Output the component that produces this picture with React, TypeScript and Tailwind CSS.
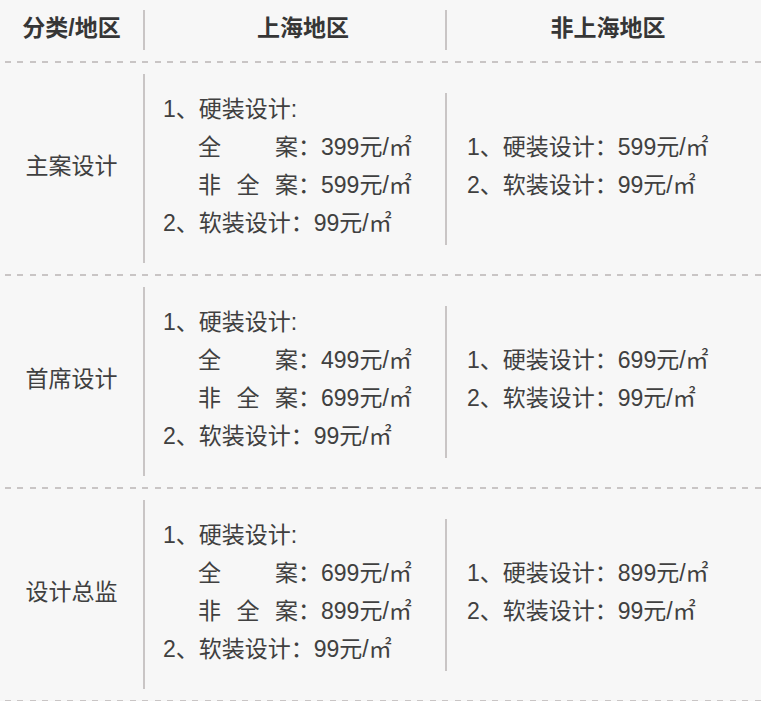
type Row = {
  name: string;
  full: string;
  notFull: string;
  other: string;
};

const ROWS: Row[] = [
  { name: '主案设计', full: '399', notFull: '599', other: '599' },
  { name: '首席设计', full: '499', notFull: '699', other: '699' },
  { name: '设计总监', full: '699', notFull: '899', other: '899' },
];

function Dash() {
  return (
    <div className="h-[2px] w-full bg-[repeating-linear-gradient(to_right,transparent_0_5px,#c9c5c5_5px_11px,transparent_11px_12.5px)]" />
  );
}

function Label({ text }: { text: string }) {
  return (
    <span className="inline-block w-[100px] [text-align-last:justify] text-justify">{text}</span>
  );
}

export default function App() {
  return (
    <div className="w-[761px] h-[701px] bg-[#f7f7f7] text-[23px] text-[#404040] font-['Liberation_Sans','Noto_Sans_CJK_SC',sans-serif] overflow-hidden">
      <div className="flex pt-[10px] pb-[11px] font-bold text-[#363636]">
        <div className="w-[143px] h-10 flex items-center justify-center pb-1">分类/地区</div>
        <div className="w-[302px] h-10 border-l-2 border-[#c9c5c5] flex items-center justify-center pl-4 pb-1">
          上海地区
        </div>
        <div className="flex-1 h-10 border-l-2 border-[#c9c5c5] flex items-center justify-center pl-2 pb-1">
          非上海地区
        </div>
      </div>
      <Dash />
      {ROWS.map((r) => (
        <div key={r.name}>
          <div className="flex items-center py-[11px] leading-[38px]">
            <div className="w-[143px] text-center pb-[6px]">{r.name}</div>
            <div className="w-[302px] border-l-2 border-[#c9c5c5] pl-[18px] pt-[16px] pb-[21px]">
              <div>1、硬装设计:</div>
              <div className="pl-[35px] flex">
                <Label text="全案" />
                <span>：{r.full}元/㎡</span>
              </div>
              <div className="pl-[35px] flex">
                <Label text="非全案" />
                <span>：{r.notFull}元/㎡</span>
              </div>
              <div>2、软装设计：99元/㎡</div>
            </div>
            <div className="flex-1 border-l-2 border-[#c9c5c5] pl-5 pt-[35px] pb-[41px]">
              <div>1、硬装设计：{r.other}元/㎡</div>
              <div>2、软装设计：99元/㎡</div>
            </div>
          </div>
          <Dash />
        </div>
      ))}
    </div>
  );
}
